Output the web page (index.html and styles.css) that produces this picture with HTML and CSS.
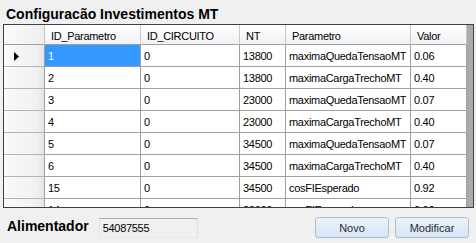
FILE: index.html
```html
<!DOCTYPE html>
<html lang="pt">
<head>
    <meta charset="UTF-8">
    <title>Configuracão Investimentos MT</title>
    <link rel="stylesheet" href="styles.css">
</head>
<body>
    <div class="title">Configuracão Investimentos MT</div>

    <div class="grid-cont">
        <div class="grid-row header-row">
            <div class="cell c0 corner"></div>
            <div class="cell c1">ID_Parametro</div>
            <div class="cell c2">ID_CIRCUITO</div>
            <div class="cell c3">NT</div>
            <div class="cell c4">Parametro</div>
            <div class="cell c5">Valor</div>
        </div>

        <div class="grid-row">
            <div class="cell c0 row-head">
                <svg class="row-arrow" width="5" height="9" viewBox="0 0 5 9"><path d="M0 0 L5 4.5 L0 9 Z" fill="#000"/></svg>
            </div>
            <div class="cell c1 selected">1</div>
            <div class="cell c2">0</div>
            <div class="cell c3">13800</div>
            <div class="cell c4">maximaQuedaTensaoMT</div>
            <div class="cell c5">0.06</div>
        </div>
        <div class="grid-row">
            <div class="cell c0 row-head"></div>
            <div class="cell c1">2</div>
            <div class="cell c2">0</div>
            <div class="cell c3">13800</div>
            <div class="cell c4">maximaCargaTrechoMT</div>
            <div class="cell c5">0.40</div>
        </div>
        <div class="grid-row">
            <div class="cell c0 row-head"></div>
            <div class="cell c1">3</div>
            <div class="cell c2">0</div>
            <div class="cell c3">23000</div>
            <div class="cell c4">maximaQuedaTensaoMT</div>
            <div class="cell c5">0.07</div>
        </div>
        <div class="grid-row">
            <div class="cell c0 row-head"></div>
            <div class="cell c1">4</div>
            <div class="cell c2">0</div>
            <div class="cell c3">23000</div>
            <div class="cell c4">maximaCargaTrechoMT</div>
            <div class="cell c5">0.40</div>
        </div>
        <div class="grid-row">
            <div class="cell c0 row-head"></div>
            <div class="cell c1">5</div>
            <div class="cell c2">0</div>
            <div class="cell c3">34500</div>
            <div class="cell c4">maximaQuedaTensaoMT</div>
            <div class="cell c5">0.07</div>
        </div>
        <div class="grid-row">
            <div class="cell c0 row-head"></div>
            <div class="cell c1">6</div>
            <div class="cell c2">0</div>
            <div class="cell c3">34500</div>
            <div class="cell c4">maximaCargaTrechoMT</div>
            <div class="cell c5">0.40</div>
        </div>
        <div class="grid-row">
            <div class="cell c0 row-head"></div>
            <div class="cell c1">15</div>
            <div class="cell c2">0</div>
            <div class="cell c3">34500</div>
            <div class="cell c4">cosFIEsperado</div>
            <div class="cell c5">0.92</div>
        </div>
        <div class="grid-row">
            <div class="cell c0 row-head"></div>
            <div class="cell c1">14</div>
            <div class="cell c2">0</div>
            <div class="cell c3">23000</div>
            <div class="cell c4">cosFIEsperado</div>
            <div class="cell c5">0.92</div>
        </div>
    </div>

    <div class="footer-cont">
        <div class="footer-label">Alimentador</div>
        <div class="text-box">54087555</div>
        <div class="btn btn-novo">Novo</div>
        <div class="btn">Modificar</div>
    </div>
</body>
</html>
```

FILE: styles.css
```css
* {
    box-sizing: border-box;
}

body {
    margin: 0;
    padding: 0;
    background-color: #f0f0f0;
    font-family: "Liberation Sans", Arial, sans-serif;
    font-size: 11px;
    color: #000;
    width: 476px;
    height: 243px;
    overflow: hidden;
}

.title {
    font-size: 14px;
    font-weight: bold;
    line-height: 18px;
    padding: 5px 0 1px 6px;
    height: 24px;
    white-space: nowrap;
}

.grid-cont {
    margin-left: 3px;
    width: 471px;
    height: 184px;
    border: 1px solid #404040;
    background-color: #ababab;
    overflow: hidden;
}

.grid-row {
    display: flex;
    height: 22px;
}

.header-row {
    height: 20px;
}

.cell {
    height: 100%;
    background-color: #fff;
    border-right: 1px solid #a0a0a0;
    border-bottom: 1px solid #a0a0a0;
    padding-left: 3px;
    display: flex;
    align-items: center;
    padding-top: 1px;
    letter-spacing: -0.3px;
    white-space: nowrap;
    overflow: hidden;
}

.header-row .cell {
    background: linear-gradient(#ffffff, #f1f2f4);
    border-right-color: #c8c8c8;
    border-bottom-color: #a0a0a0;
    padding-left: 6px;
    padding-top: 2px;
}

.header-row .corner {
    background: linear-gradient(to right, #fbfbfb, #eeeeee);
}

.c0 { width: 41px; }
.c1 { width: 96px; }
.c2 { width: 99px; }
.c3 { width: 46px; }
.c4 { width: 125px; }
.c5 { width: 56px; }

.row-head {
    background: linear-gradient(to right, #fafafa, #f1f1f1 80%, #e4e4e4);
    border-bottom-color: #b4b4b4;
    padding-left: 10px;
}

.selected {
    background-color: #3399ff;
    color: #fff;
}

.footer-cont {
    display: flex;
    align-items: flex-start;
    padding: 9px 7px 0 7px;
}

.footer-label {
    font-size: 14px;
    font-weight: bold;
    line-height: 16px;
    margin-top: 1px;
    white-space: nowrap;
}

.text-box {
    margin-left: 10px;
    width: 99px;
    height: 20px;
    margin-top: 1px;
    border: 1px solid;
    border-color: #abadb3 #dbdfe6 #e3e9ef #e2e3ea;
    background-color: #f0f0f0;
    padding: 3px 0 0 3px;
    letter-spacing: -0.3px;
}

.btn {
    width: 74px;
    height: 21px;
    border: 1px solid #acbdd2;
    border-radius: 3px;
    background: linear-gradient(#ebf3fc, #d6e5f5);
    color: #2b2b2b;
    display: flex;
    align-items: center;
    justify-content: center;
    margin-left: 6px;
}

.btn-novo {
    margin-left: auto;
}
```
